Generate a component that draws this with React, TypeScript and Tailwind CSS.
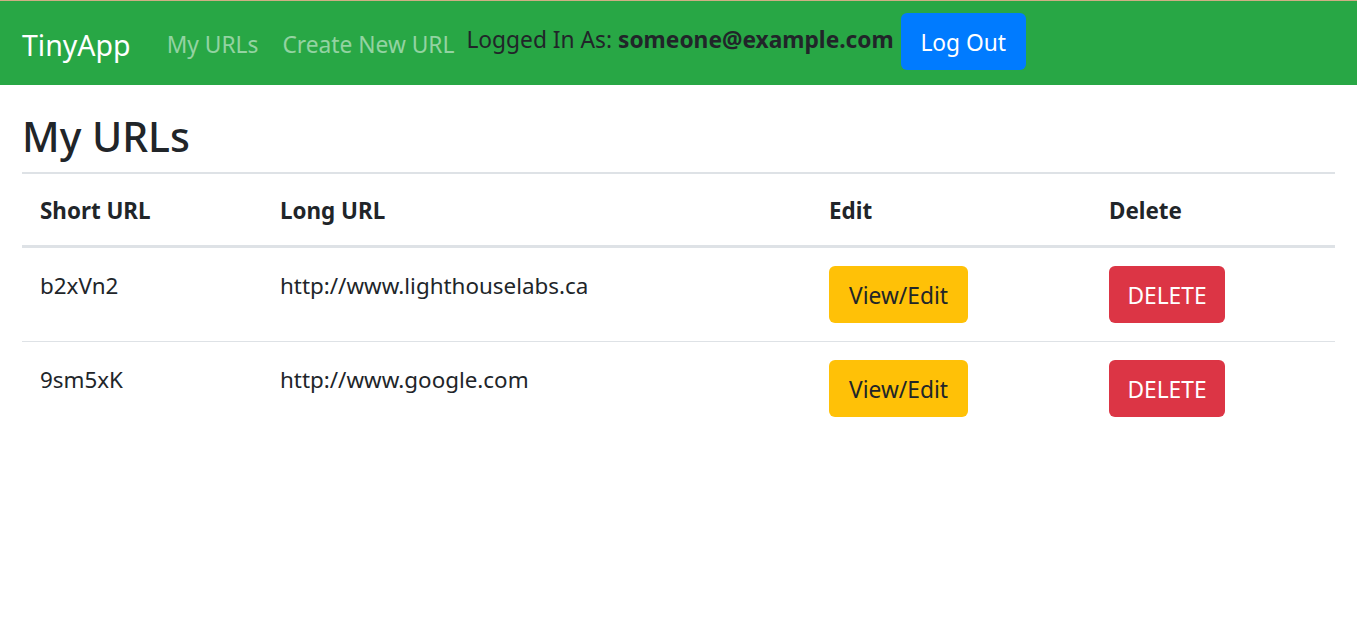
import React from "react";

const rows = [
  { short: "b2xVn2", long: "http://www.lighthouselabs.ca" },
  { short: "9sm5xK", long: "http://www.google.com" },
];

export default function App() {
  return (
    <div
      className="min-h-[626px] bg-white text-[#212529]"
      style={{ fontFamily: '"Noto Sans", "Open Sans", sans-serif' }}
    >
      <nav className="flex h-[85px] items-center border-t border-[#cfae85] bg-[#28a745] px-[22px]">
        <span className="mr-[24px] mt-[4px] text-[28.5px] leading-[45px] text-white">TinyApp</span>
        <a className="mt-[4px] px-[12px] text-[22.75px] leading-[36px] text-white/50">My URLs</a>
        <a className="mt-[4px] px-[12px] text-[22.75px] leading-[36px] text-white/50">Create New URL</a>
        <span className="mb-[6px] text-[22.75px] leading-[36px]">
          Logged In As: <b className="font-bold">someone@example.com</b>
        </span>
        <button className="mb-[3px] ml-[7px] flex h-[57px] w-[125px] items-center justify-center rounded-[6px] bg-[#007bff] pt-[4px] text-[22.75px] text-white">
          Log Out
        </button>
      </nav>
      <main className="px-[22px]">
        <h1 className="mb-[11px] mt-[27px] text-[41px] font-medium leading-[1.2]">My URLs</h1>
        <table className="w-full border-collapse text-left text-[22.4px] leading-[36px]">
          <thead>
            <tr className="border-t-2 border-b-[3px] border-[#dee2e6]">
              <th className="w-[240px] px-[18px] pb-[16px] pt-[19px] align-bottom font-bold">Short URL</th>
              <th className="w-[549px] px-[18px] pb-[16px] pt-[19px] align-bottom font-bold">Long URL</th>
              <th className="w-[280px] px-[18px] pb-[16px] pt-[19px] align-bottom font-bold">Edit</th>
              <th className="px-[18px] pb-[16px] pt-[19px] align-bottom font-bold">Delete</th>
            </tr>
          </thead>
          <tbody>
            {rows.map((r, i) => (
              <tr key={r.short} className={i > 0 ? "border-t border-[#dee2e6]" : ""}>
                <td className="px-[18px] pb-[16px] pt-[20px] align-top">{r.short}</td>
                <td className="px-[18px] pb-[16px] pt-[20px] align-top">{r.long}</td>
                <td className="px-[18px] py-[18px] align-top">
                  <button className="flex h-[57px] w-[139px] items-center justify-center rounded-[6px] bg-[#ffc107] pt-[2px] text-[22.75px] text-[#212529]">
                    View/Edit
                  </button>
                </td>
                <td className="px-[18px] py-[18px] align-top">
                  <button className="flex h-[57px] w-[116px] items-center justify-center rounded-[6px] bg-[#dc3545] pt-[2px] text-[22.75px] text-white">
                    DELETE
                  </button>
                </td>
              </tr>
            ))}
          </tbody>
        </table>
      </main>
    </div>
  );
}
